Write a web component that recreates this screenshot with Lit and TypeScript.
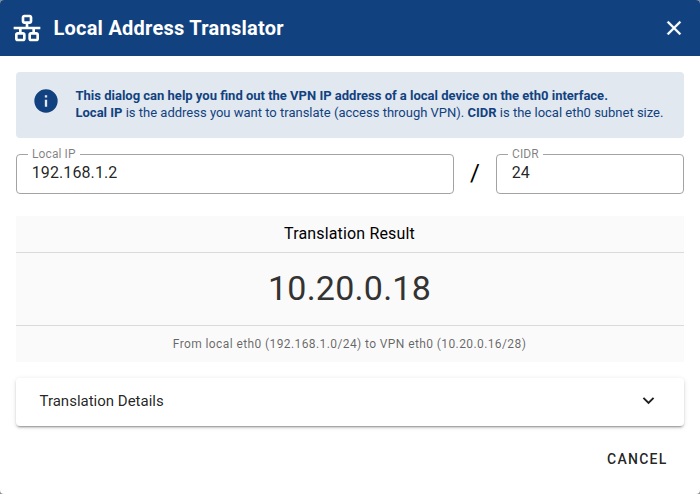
import { LitElement, html, css } from "lit";
import { customElement, property, state } from "lit/decorators.js";

@customElement("outlined-field")
class OutlinedField extends LitElement {
  @property() label = "";
  @property() value = "";

  static styles = css`
    :host { display: block; min-width: 0; }
    fieldset {
      box-sizing: border-box;
      height: 46px;
      margin: 0;
      padding: 0 15px 0 8px;
      min-width: 0;
      border: 1px solid #a3a3a3;
      border-radius: 4px;
    }
    legend {
      padding: 0 4px 0 4px;
      margin-left: 3px;
      height: 12px;
      line-height: 12px;
      font-size: 12px;
      letter-spacing: 0.1px;
      color: rgba(0, 0, 0, 0.5);
      white-space: nowrap;
    }
    .value {
      padding: 1px 0 0 6.75px;
      font-size: 16px;
      line-height: 24px;
      letter-spacing: 0.1px;
      color: rgba(0, 0, 0, 0.87);
    }
  `;

  render() {
    return html`<fieldset>
      <legend>${this.label}</legend>
      <div class="value">${this.value}</div>
    </fieldset>`;
  }
}

@customElement("app-root")
class AppRoot extends LitElement {
  @state() private localIp = "192.168.1.2";
  @state() private cidr = "24";

  static styles = css`
    :host {
      display: block;
      height: 494px;
      background: #8b8b8b;
      font-family: Roboto, sans-serif;
      color: rgba(0, 0, 0, 0.87);
    }
    * { box-sizing: border-box; }
    svg { display: block; fill: currentColor; flex: none; }
    .dialog {
      display: flex;
      flex-direction: column;
      height: 494px;
      background: #fff;
      border-radius: 4px;
      overflow: hidden;
    }
    .bar {
      display: flex;
      align-items: center;
      height: 56px;
      padding: 0 14.5px 0 11px;
      background: #11427f;
      color: #fff;
    }
    .title {
      flex: 1;
      margin-left: 10.4px;
      font-size: 20px;
      line-height: 30px;
      font-weight: 700;
      letter-spacing: 0.25px;
    }
    .body { padding: 16px 16px 0; }
    .alert {
      display: flex;
      height: 66px;
      padding: 15px 16px;
      border-radius: 4px;
      background: #e2e8f0;
      color: #11427f;
    }
    .alert-text {
      margin-left: 15.5px;
      font-size: 13px;
      line-height: 17px;
      white-space: nowrap;
    }
    .fields {
      display: grid;
      grid-template-columns: 438px 42px 188px;
      margin-top: 10px;
    }
    .slash {
      padding-top: 7px;
      text-align: center;
      font-size: 24px;
      line-height: 36px;
      font-weight: 400;
      color: #000;
    }
    .result {
      margin-top: 22px;
      height: 146px;
      padding-right: 1px;
      background: #fafafa;
      text-align: center;
    }
    .result > * { margin-right: -1px; padding-right: 1px; }
    .result-title {
      height: 36px;
      line-height: 35px;
      font-size: 16px;
      letter-spacing: 0.15px;
      color: #000;
    }
    .result-value {
      height: 74px;
      border: solid #dadada;
      border-width: 1px 0;
      line-height: 70px;
      font-size: 34px;
      letter-spacing: 0.25px;
      color: #333;
    }
    .result-note {
      line-height: 36px;
      font-size: 12px;
      letter-spacing: 0.4px;
      color: rgba(0, 0, 0, 0.6);
    }
    .panel {
      display: flex;
      align-items: center;
      justify-content: space-between;
      height: 48px;
      margin-top: 16px;
      padding: 0 24.5px 2px 23.5px;
      border-radius: 4px;
      font-size: 15px;
      box-shadow: 0 3px 1px -2px rgba(0, 0, 0, 0.2), 0 2px 2px 0 rgba(0, 0, 0, 0.14),
        0 1px 5px 0 rgba(0, 0, 0, 0.12);
    }
    .panel svg { margin-bottom: 2px; }
    .actions {
      display: flex;
      justify-content: flex-end;
      margin-top: 15px;
      padding-right: 32.5px;
    }
    button {
      height: 36px;
      padding: 0;
      border: 0;
      background: none;
      font: 500 14px Roboto, sans-serif;
      letter-spacing: 1.25px;
      color: inherit;
    }
  `;

  render() {
    return html`
      <div class="dialog">
        <header class="bar">
          <svg width="32" height="32" viewBox="0 0 24 24">
            <path
              d="M10,2C8.89,2 8,2.89 8,4V7C8,8.11 8.89,9 10,9H11V11H2V13H6V15H5C3.89,15 3,15.89 3,17V20C3,21.11 3.89,22 5,22H9C10.11,22 11,21.11 11,20V17C11,15.89 10.11,15 9,15H8V13H16V15H15C13.89,15 13,15.89 13,17V20C13,21.11 13.89,22 15,22H19C20.11,22 21,21.11 21,20V17C21,15.89 20.11,15 19,15H18V13H22V11H13V9H14C15.11,9 16,8.11 16,7V4C16,2.89 15.11,2 14,2H10M10,4H14V7H10V4M5,17H9V20H5V17M15,17H19V20H15V17Z"
            />
          </svg>
          <div class="title">Local Address Translator</div>
          <svg width="24" height="24" viewBox="0 0 24 24">
            <path
              d="M19,6.41L17.59,5L12,10.59L6.41,5L5,6.41L10.59,12L5,17.59L6.41,19L12,13.41L17.59,19L19,17.59L13.41,12L19,6.41Z"
              stroke="currentColor"
              stroke-width="0.3"
            />
          </svg>
        </header>
        <div class="body">
          <div class="alert">
            <svg width="28" height="28" viewBox="0 0 24 24">
              <path
                d="M13,9H11V7H13M13,17H11V11H13M12,2A10,10 0 0,0 2,12A10,10 0 0,0 12,22A10,10 0 0,0 22,12A10,10 0 0,0 12,2Z"
              />
            </svg>
            <div class="alert-text">
              <b>This dialog can help you find out the VPN IP address of a local device on the eth0 interface.</b><br />
              <b>Local IP</b> is the address you want to translate (access through VPN). <b>CIDR</b> is the local eth0
              subnet size.
            </div>
          </div>
          <div class="fields">
            <outlined-field label="Local IP" .value=${this.localIp}></outlined-field>
            <div class="slash">/</div>
            <outlined-field label="CIDR" .value=${this.cidr}></outlined-field>
          </div>
          <section class="result">
            <div class="result-title">Translation Result</div>
            <div class="result-value">10.20.0.18</div>
            <div class="result-note">From local eth0 (192.168.1.0/24) to VPN eth0 (10.20.0.16/28)</div>
          </section>
          <div class="panel">
            <span>Translation Details</span>
            <svg width="23" height="23" viewBox="0 0 24 24">
              <path d="M7.41,8.58L12,13.17L16.59,8.58L18,10L12,16L6,10L7.41,8.58Z" />
            </svg>
          </div>
        </div>
        <div class="actions"><button>CANCEL</button></div>
      </div>
    `;
  }
}
